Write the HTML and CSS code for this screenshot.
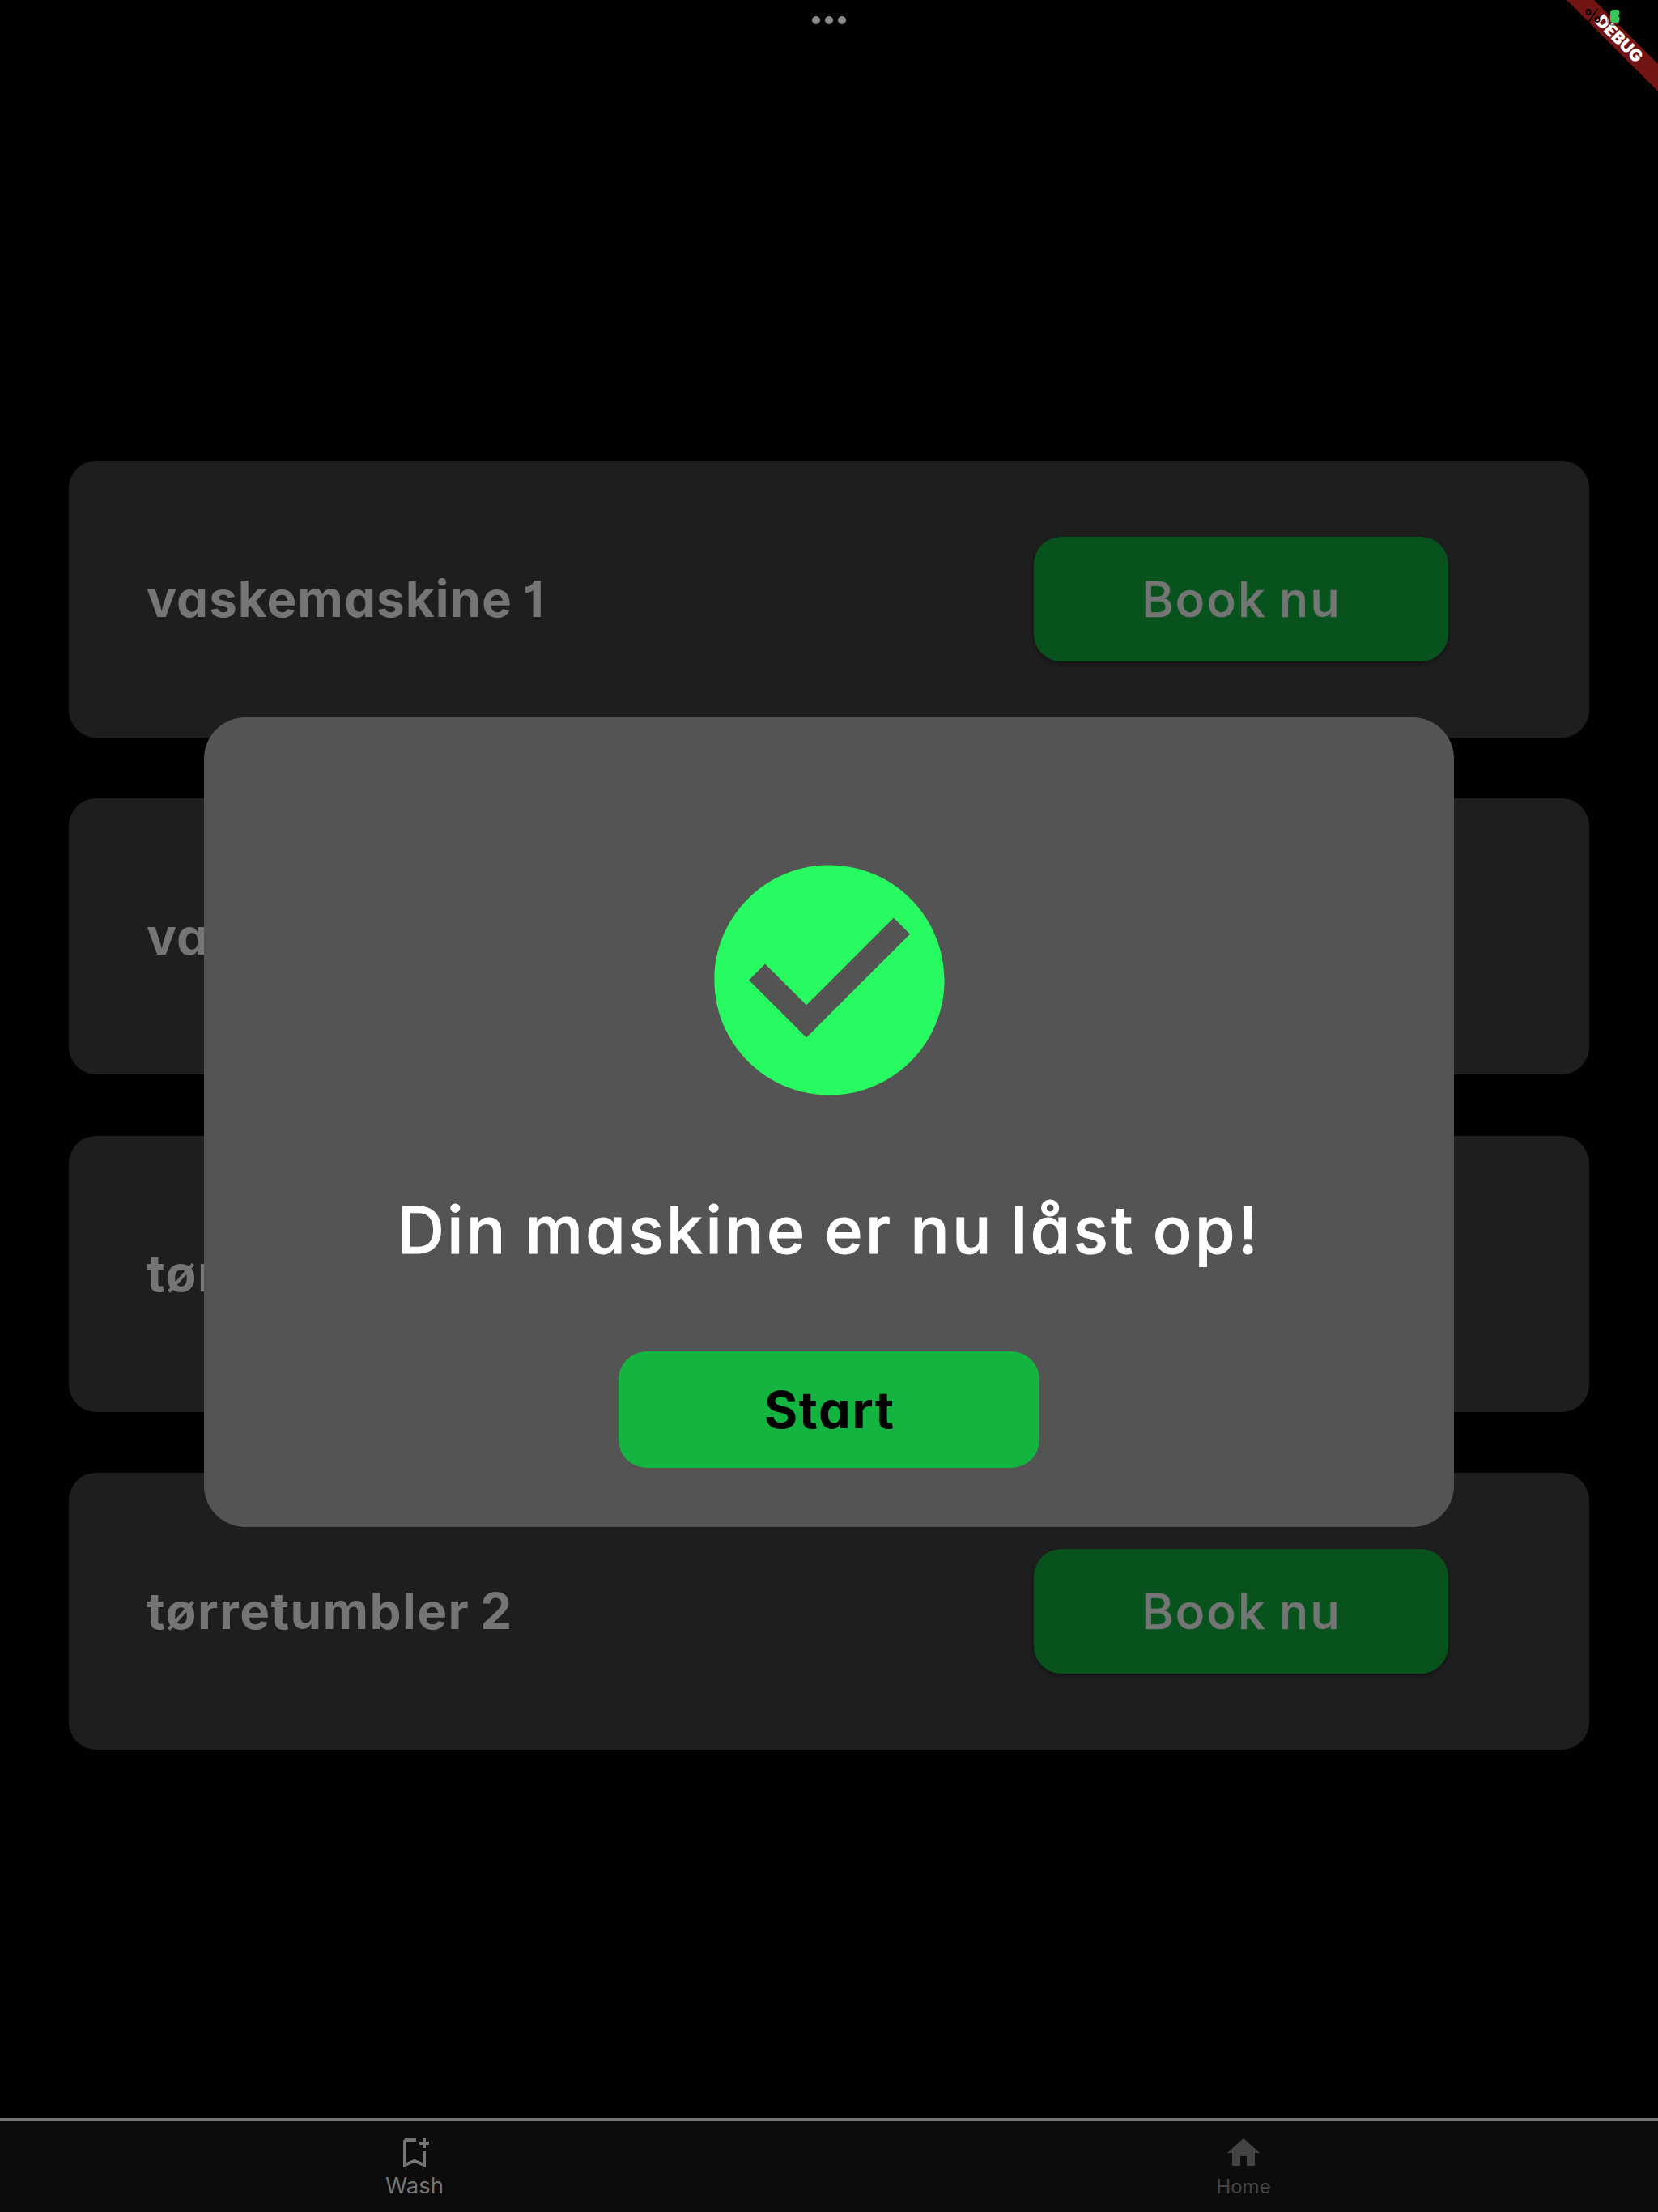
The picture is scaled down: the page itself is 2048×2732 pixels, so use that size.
FILE: index.html
```html
<!DOCTYPE html>
<html lang="da">
<head>
<meta charset="utf-8">
<title>Vaskeri</title>
<link rel="stylesheet" href="styles.css">
</head>
<body>
<div class="screen">
  <main class="machines">
    <section class="card"><h2 class="card-name">vaskemaskine 1</h2><button class="book">Book nu</button></section>
    <section class="card"><h2 class="card-name">va</h2></section>
    <section class="card"><h2 class="card-name card-name-dryer">tør</h2></section>
    <section class="card"><h2 class="card-name card-name-dryer">tørretumbler 2</h2><button class="book">Book nu</button></section>
  </main>
  <nav class="tabs">
    <a class="tab tab-active">
      <svg class="tab-icon" viewBox="0 0 24 24"><path d="M17 11v6.97l-5-2.14-5 2.14V5h6V3H7c-1.1 0-2 .9-2 2v16l7-3 7 3V11h-2zm4-4h-2v2h-2V7h-2V5h2V3h2v2h2v2z"/></svg>
      <span class="tab-label">Wash</span>
    </a>
    <a class="tab">
      <svg class="tab-icon" viewBox="0 0 24 24"><path d="M10 20v-6h4v6h5v-8h3L12 3 2 12h3v8z"/></svg>
      <span class="tab-label">Home</span>
    </a>
  </nav>
  <div class="dialog">
    <svg class="check" viewBox="0 0 24 24"><path d="M12 2C6.48 2 2 6.48 2 12s4.48 10 10 10 10-4.48 10-10S17.52 2 12 2zm-2 15l-5-5 1.41-1.41L10 14.17l7.59-7.59L19 8l-9 9z"/></svg>
    <p class="message">Din maskine er nu låst op!</p>
    <button class="start">Start</button>
  </div>
  <div class="debug">DEBUG</div>
  <header class="status">
    <span class="clock">09.29</span>
    <span class="date">tir. 22. mar.</span>
    <span class="grabber"><i></i><i></i><i></i></span>
    <svg class="signal" viewBox="0 0 34 20"><path d="M0 13h5v7H0zM9 9h5v11H9zM18 5h5v15h-5zM27 0h5v20h-5z"/></svg>
    <svg class="wifi" viewBox="0 0 24 18"><path d="M12 18l4-5a6 6 0 0 0-8 0zM2 6l2 2a12 12 0 0 1 16 0l2-2a15 15 0 0 0-20 0z"/></svg>
    <span class="percent">31 %</span>
    <svg class="battery" viewBox="0 0 50 24">
      <rect x="1" y="1" width="43" height="22" rx="6" fill="none" stroke="#000" stroke-opacity=".4" stroke-width="2"/>
      <path d="M8 4h4.500a3 3 0 0 1 3 3v2l-2 3.500h2v4a3 3 0 0 1-3 3.500H8a4 4 0 0 1-4-4V8a4 4 0 0 1 4-4z" fill="#34c759"/>
      <path d="M27 2l-11 11h6l-3 9 11-12h-6z" fill="#000"/>
    </svg>
  </header>
</div>
</body>
</html>
```

FILE: styles.css
```css
* { box-sizing: border-box; }
body { margin: 0; background: #010101; font-family: Inter, "Noto Sans", sans-serif; }
button { border: 0; padding: 0; font: inherit; }

.screen { position: relative; width: 2048px; height: 2732px; overflow: hidden; display: flex; flex-direction: column; background: #010101; }

.machines { flex: 1; display: flex; flex-direction: column; gap: 75.3px; padding: 569px 85px 0; }
.card { display: flex; align-items: center; justify-content: space-between; height: 341.5px; padding: 0 174px 0 96px; border-radius: 34px; background: #1e1e1e; }
.card-name { margin: 0; font-size: 62px; font-weight: 700; line-height: 80px; letter-spacing: 1px; word-spacing: -3px; color: #757575; font-feature-settings: "cv11", "cv01"; white-space: nowrap; }
.card-name-dryer { letter-spacing: 1.4px; }
.book { width: 512px; height: 154px; border-radius: 34px; background: #08521d; color: #757575; font-size: 60px; font-weight: 500; letter-spacing: 2.3px; text-indent: 1px; word-spacing: -3px; -webkit-text-stroke: .6px #757575; box-shadow: 0 3px 5px rgba(0, 0, 0, .35); }

.tabs { display: flex; height: 116px; border-top: 4px solid #757575; background: #0c0c0c; }
.tab { flex: 1; display: flex; flex-direction: column; align-items: center; padding-top: 15px; color: #444; font-size: 24px; }
.tab-icon { width: 48px; height: 48px; fill: currentColor; }
.tab-label { line-height: 36px; }
.tab-active { color: #757575; font-size: 27.5px; }
.tab-active .tab-label { line-height: 32px; }

.dialog { position: absolute; left: 252px; top: 886px; width: 1544px; height: 1000px; border-radius: 51px; background: #545454; display: flex; flex-direction: column; align-items: center; padding-top: 154px; }
.check { width: 341px; height: 341px; margin-left: 1px; fill: #27fb61; }
.message { margin: 78px 0 0; font-size: 80px; font-weight: 500; line-height: 120px; letter-spacing: 3.6px; word-spacing: -4px; color: #fff; -webkit-text-stroke: 1px #fff; font-feature-settings: "cv11"; white-space: nowrap; }
.start { width: 520px; height: 144px; margin-top: 90px; border-radius: 35px; background: #13b440; color: #000; font-size: 63px; font-weight: 700; letter-spacing: 1.7px; text-indent: 1.7px; font-feature-settings: "cv11"; }

.debug { position: absolute; left: 1900px; top: 36px; width: 200px; height: 24px; background: #731414; color: #fff; font-size: 20.8px; font-weight: 900; line-height: 24px; text-align: center; transform: rotate(45deg); }

.status { position: absolute; inset: 0 0 auto 0; height: 40px; padding-left: 13px; display: flex; align-items: center; color: #000; font-size: 23px; font-weight: 500; line-height: 40px; white-space: nowrap; }
.clock { width: 88px; }
.date { width: 902px; }
.grabber { display: flex; gap: 6px; width: 845px; padding-top: 9px; }
.grabber i { width: 10px; height: 10px; border-radius: 50%; background: #8a8a8a; }
.signal { width: 34px; height: 20px; margin-right: 12px; }
.wifi { width: 24px; height: 18px; margin-right: 7px; }
.percent { width: 60px; letter-spacing: .3px; }
.battery { width: 50px; height: 24px; }
```
